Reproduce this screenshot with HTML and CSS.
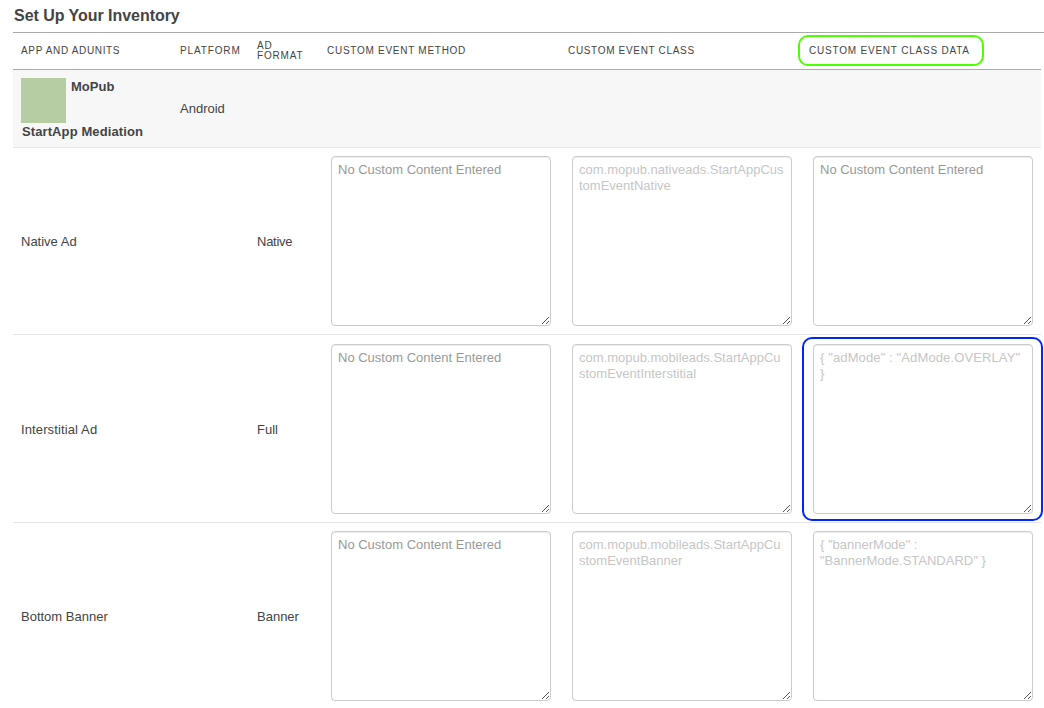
FILE: index.html
```
<!DOCTYPE html>
<html lang="en">
<head>
<meta charset="utf-8">
<title>Set Up Your Inventory</title>
<link rel="stylesheet" href="styles.css">
</head>
<body>
<svg class="defs" width="0" height="0"><defs><g id="grip" fill="#555"><path d="M0 6h1v1H0zM1 5h1v1H1zM2 4h1v1H2zM3 3h1v1H3zM4 2h1v1H4zM5 1h1v1H5zM6 0h1v1H6zM4 6h1v1H4zM5 5h1v1H5zM6 4h1v1H6z"/></g></defs></svg>
<main class="inventory">
<h1 class="title"><span>Set Up Your Inventory</span></h1>
<div class="row head">
<div class="cell"><span class="h-app">APP AND ADUNITS</span></div>
<div class="cell"><span class="h-platform">PLATFORM</span></div>
<div class="cell"><span class="h-format">AD<br>FORMAT</span></div>
<div class="cell"><span class="h-method">CUSTOM EVENT METHOD</span></div>
<div class="cell"><span class="h-class">CUSTOM EVENT CLASS</span></div>
<div class="cell marked"><span class="h-data">CUSTOM EVENT CLASS DATA</span></div>
</div>
<div class="row app">
<div class="cell app-cell"><div class="app-top"><span class="app-icon"></span><b>MoPub</b></div><b class="app-name">StartApp Mediation</b></div>
<div class="cell"><span>Android</span></div>
</div>
<div class="row unit">
<div class="cell"><span>Native Ad</span></div><div class="cell"></div><div class="cell"><span class="tight">Native</span></div>
<div class="field entered"><span>No Custom Content Entered</span><svg class="grip" width="7" height="7"><use href="#grip"/></svg></div>
<div class="field"><span>com.mopub.nativeads.StartAppCus<br>tomEventNative</span><svg class="grip" width="7" height="7"><use href="#grip"/></svg></div>
<div class="field entered"><span>No Custom Content Entered</span><svg class="grip" width="7" height="7"><use href="#grip"/></svg></div>
</div>
<div class="row unit tall">
<div class="cell"><span class="wide">Interstitial Ad</span></div><div class="cell"></div><div class="cell"><span>Full</span></div>
<div class="field entered"><span>No Custom Content Entered</span><svg class="grip" width="7" height="7"><use href="#grip"/></svg></div>
<div class="field"><span>com.mopub.mobileads.StartAppCu<br>stomEventInterstitial</span><svg class="grip" width="7" height="7"><use href="#grip"/></svg></div>
<div class="field highlighted"><span class="wide">{ "adMode" : "AdMode.OVERLAY"<br>}</span><svg class="grip" width="7" height="7"><use href="#grip"/></svg></div>
</div>
<div class="row unit last">
<div class="cell"><span>Bottom Banner</span></div><div class="cell"></div><div class="cell"><span>Banner</span></div>
<div class="field entered"><span>No Custom Content Entered</span><svg class="grip" width="7" height="7"><use href="#grip"/></svg></div>
<div class="field"><span>com.mopub.mobileads.StartAppCu<br>stomEventBanner</span><svg class="grip" width="7" height="7"><use href="#grip"/></svg></div>
<div class="field"><span>{ "bannerMode" :<br>"BannerMode.STANDARD" }</span><svg class="grip" width="7" height="7"><use href="#grip"/></svg></div>
</div>
</main>
</body>
</html>
```
FILE: styles.css
```
*, *::after { box-sizing: border-box; }
body { margin: 0; height: 708px; overflow: hidden; background: #fff; color: #444; font: 13px/16px "Liberation Sans", Arial, sans-serif; }
.defs { display: block; width: 0; height: 0; }
.inventory { padding-left: 13px; }
.title { height: 33px; margin: 0; padding: 6px 0 0 1px; border-bottom: 1px solid #aaa; font-size: 16px; line-height: 19px; letter-spacing: -0.04px; }
.row { display: grid; grid-template-columns: 159px 77px 70px 241px 241px 240px; width: 1028px; border-bottom: 1px solid #e5e5e5; }
.cell { display: flex; align-items: center; padding-left: 8px; white-space: nowrap; }
.head { height: 37px; border-color: #aaa; font-size: 10px; line-height: 10px; }
.h-app { letter-spacing: 0.66px; }
.h-platform { letter-spacing: 0.87px; }
.h-format { letter-spacing: 0.83px; }
.h-method { letter-spacing: 0.73px; }
.h-class { letter-spacing: 0.67px; }
.h-data { letter-spacing: 0.79px; }
.marked { position: relative; }
.marked::after { content: ""; position: absolute; left: -3px; top: 2px; width: 186px; height: 31px; border: 2px solid #4cff00; border-radius: 10px; }
.app { height: 78px; background: #f7f7f7; }
.app-cell { display: block; padding-top: 8px; }
.app-top { display: flex; gap: 5px; height: 45px; }
.app-top b { padding-top: 1px; }
.app-icon { width: 45px; height: 45px; background: #b6cca2; }
.app-name { display: block; padding: 1px 0 0 1px; letter-spacing: 0.1px; }
.unit { height: 187px; padding-top: 8px; align-items: start; }
.unit .cell { height: 170px; padding-top: 2px; }
.tall { height: 188px; padding-top: 9px; }
.last { border-bottom: 0; }
.field { position: relative; width: 220px; height: 170px; margin-left: 12px; padding: 5px 0 0 6px; border: 1px solid #ccc; border-radius: 4px; box-shadow: inset 0 1px 1px rgba(0,0,0,.075); color: #c6c6c6; white-space: nowrap; }
.entered { color: #999; }
.wide { letter-spacing: 0.12px; }
.tight { letter-spacing: -0.25px; }
.grip { position: absolute; right: 1px; bottom: 1px; }
.highlighted::after { content: ""; position: absolute; left: -12px; top: -8px; width: 241px; height: 184px; border: 2px solid #0026ff; border-radius: 10px; }
```
